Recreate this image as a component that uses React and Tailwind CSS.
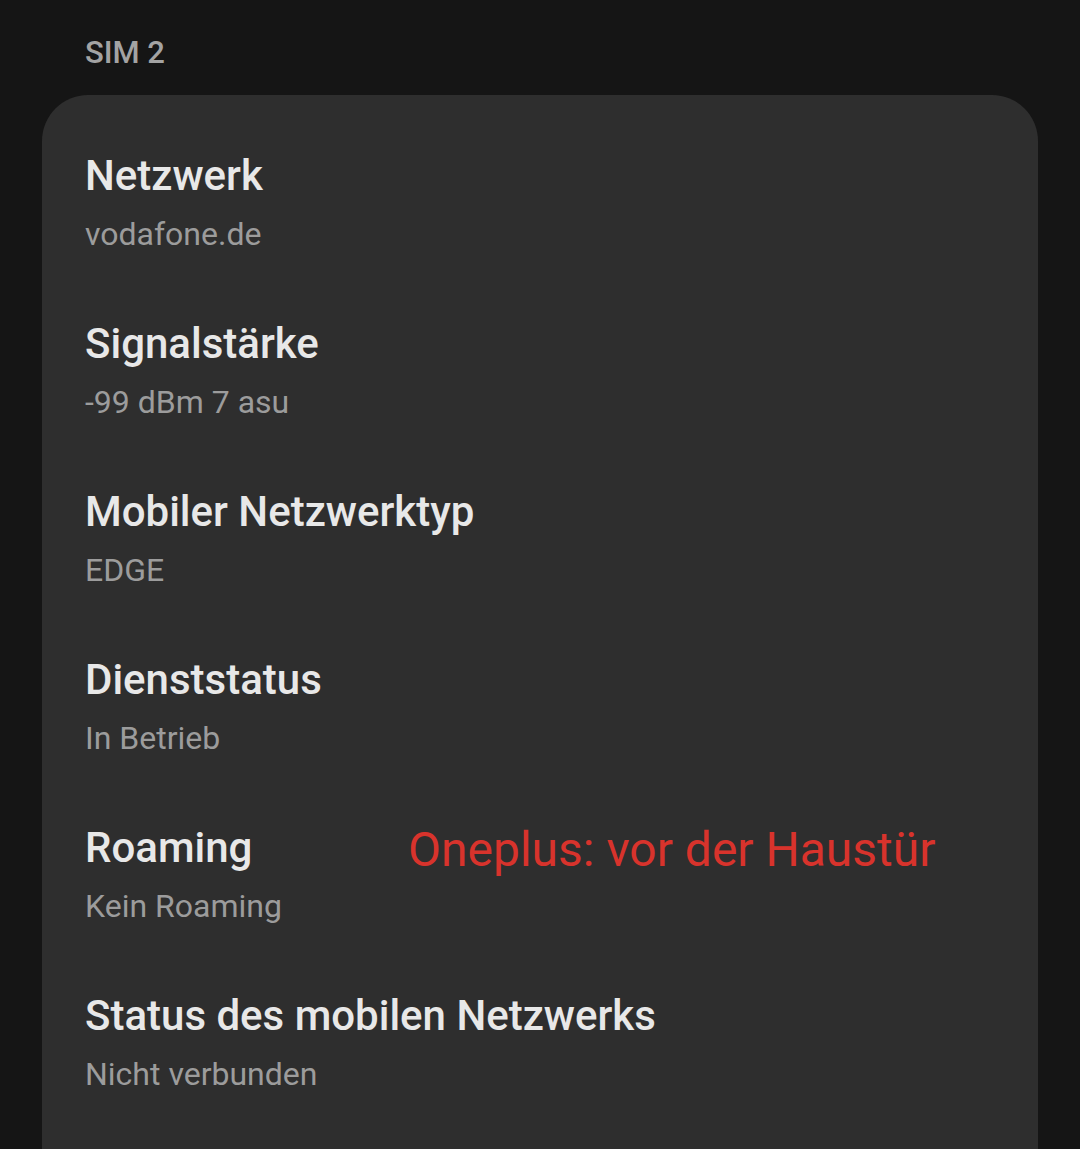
export default function App() {
  const items = [
    ["Netzwerk", "vodafone.de"],
    ["Signalstärke", "-99 dBm 7 asu"],
    ["Mobiler Netzwerktyp", "EDGE"],
    ["Dienststatus", "In Betrieb"],
    ["Roaming", "Kein Roaming"],
    ["Status des mobilen Netzwerks", "Nicht verbunden"],
  ];
  return (
    <div className="min-h-[1149px] h-[1149px] overflow-hidden bg-[#151515] px-[42px] font-['Roboto',sans-serif]">
      <div className="h-[95px] pl-[43px] pt-[33px]">
        <div className="text-[31px] leading-[40px] font-medium text-[#a3a3a3]">SIM 2</div>
      </div>
      <div className="relative rounded-t-[46px] bg-[#2e2e2e] pt-[57px] pl-[43px] h-[1100px]">
        {items.map(([t, s], i) => (
          <div key={t} className="relative h-[168px]">
            <div className="text-[42px] leading-[48px] font-medium text-[#e8e8e8]">{t}</div>
            <div className="mt-[14px] text-[32px] leading-[40px] text-[#9c9c9c]">{s}</div>
            {i === 4 && (
              <div className="absolute left-[323px] top-[-2px] text-[48px] leading-[56px] text-[#d8332c]">
                Oneplus: vor der Haustür
              </div>
            )}
          </div>
        ))}
      </div>
    </div>
  );
}
